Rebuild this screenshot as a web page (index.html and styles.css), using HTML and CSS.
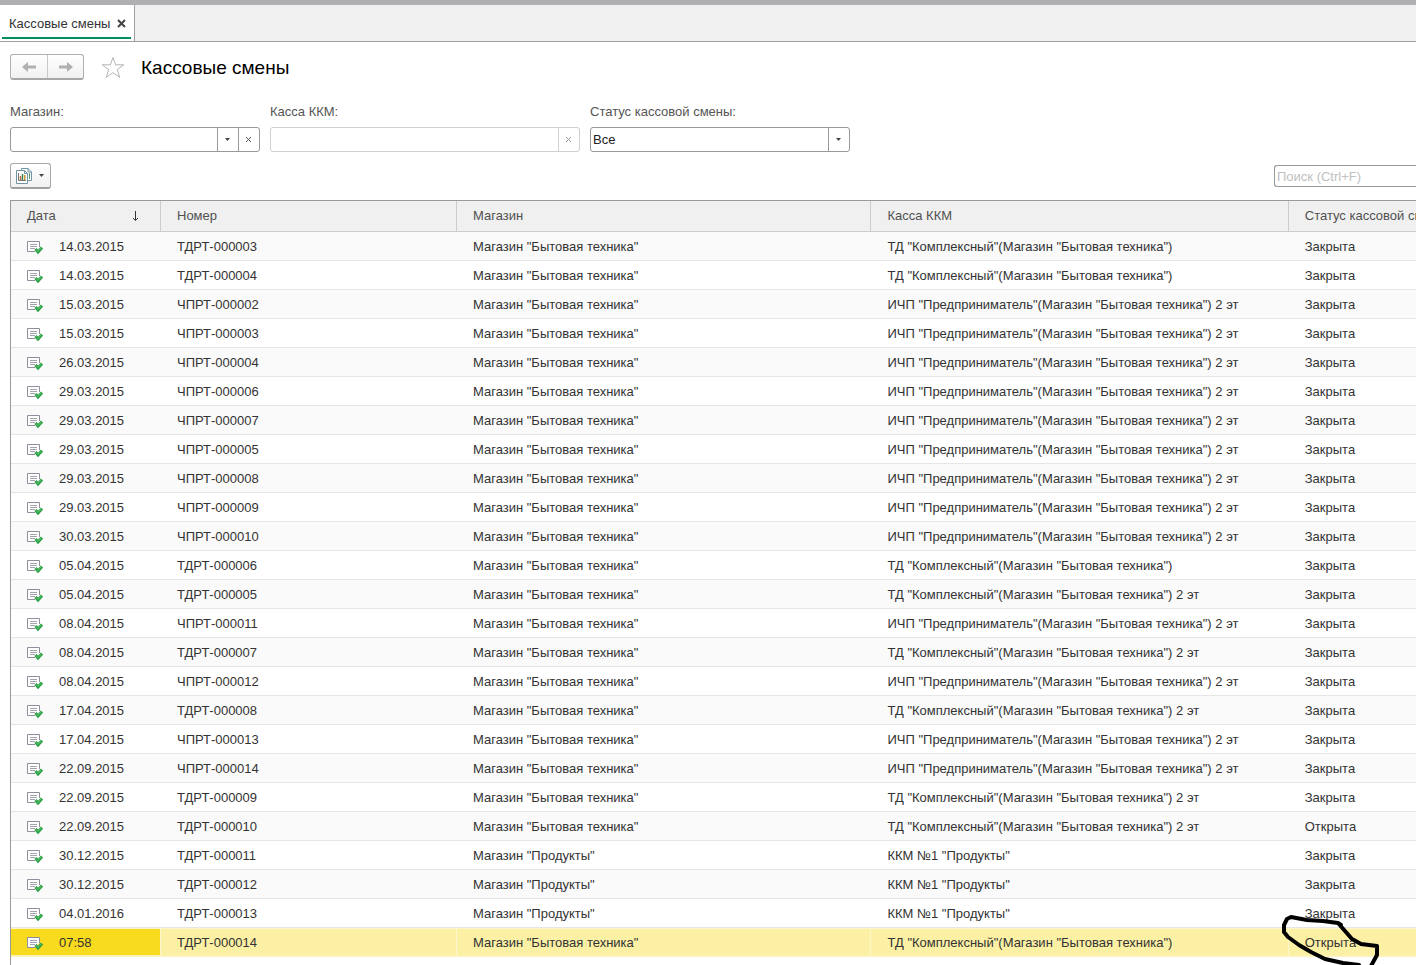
FILE: index.html
```html
<!DOCTYPE html>
<html lang="ru">
<head>
    <meta charset="UTF-8">
    <meta name="viewport" content="width=device-width, initial-scale=1.0">
    <title>Кассовые смены</title>
    <link rel="stylesheet" href="styles.css">
</head>
<body>
    <svg class="sprite" aria-hidden="true">
        <symbol id="icon-doc" viewBox="0 0 16 14">
            <path d="M12.500 7V1.500H0.500V11.500H8" fill="#fff" stroke="#8f8f9c"/>
            <path d="M3 4.500H10M3 6.500H10M3 8.500H8" stroke="#a3a3ad" fill="none"/>
            <path d="M8.500 9L11 12L15 7.500" stroke="#2f9e48" stroke-width="3" fill="none"/>
            <path d="M9 9.500L11 11.500L14.500 7.500" stroke="#58c86c" stroke-width="1" fill="none"/>
        </symbol>
        <symbol id="icon-caret" viewBox="0 0 5 3">
            <path d="M0 0H5L2.500 3Z" fill="#444"/>
        </symbol>
        <symbol id="icon-cross" viewBox="0 0 7 7">
            <path d="M1 1L6 6M6 1L1 6" stroke="currentColor" fill="none"/>
        </symbol>
    </svg>

    <div class="tabs">
        <div class="tab">
            <a href="#" class="tab-title">Кассовые смены</a>
            <button class="tab-close" aria-label="Закрыть">
                <svg width="9" height="9" viewBox="0 0 9 9"><path d="M1 1L8 8M8 1L1 8" stroke="#444" stroke-width="2" fill="none"/></svg>
            </button>
        </div>
    </div>

    <div class="title-bar">
        <div class="nav-buttons">
            <button aria-label="Назад">
                <svg width="14" height="12" viewBox="0 0 14 12"><path d="M0 6L6 1V4.500H14V7.500H6V11Z" fill="#b0b0b0"/></svg>
            </button>
            <button aria-label="Вперед">
                <svg width="14" height="12" viewBox="0 0 14 12"><path d="M14 6L8 1V4.500H0V7.500H8V11Z" fill="#b0b0b0"/></svg>
            </button>
        </div>
        <button class="star" aria-label="В избранное">
            <svg width="24" height="23" viewBox="0 0 24 23"><path d="M12 1.500L14.600 8.800H22.800L16.300 13.500L18.700 21.300L12 16.700L5.300 21.300L7.700 13.500L1.200 8.800H9.400Z" fill="#fff" stroke="#b4b4b4"/></svg>
        </button>
        <h1>Кассовые смены</h1>
    </div>

    <div class="filters">
        <div class="field field-shop">
            <label for="shop">Магазин:</label>
            <div class="box">
                <input type="text" id="shop">
                <button aria-label="Выбрать"><svg width="5" height="3"><use href="#icon-caret"/></svg></button>
                <button aria-label="Очистить"><svg width="7" height="7"><use href="#icon-cross"/></svg></button>
            </div>
        </div>
        <div class="field field-kkm">
            <label for="kkm">Касса ККМ:</label>
            <div class="box disabled">
                <input type="text" id="kkm" disabled>
                <button aria-label="Очистить" disabled><svg width="7" height="7"><use href="#icon-cross"/></svg></button>
            </div>
        </div>
        <div class="field field-status">
            <label for="status">Статус кассовой смены:</label>
            <div class="box">
                <select id="status">
                    <option>Все</option>
                    <option>Открыта</option>
                    <option>Закрыта</option>
                </select>
                <span class="select-arrow"><svg width="5" height="3"><use href="#icon-caret"/></svg></span>
            </div>
        </div>
    </div>

    <div class="toolbar">
        <button class="report-button" aria-label="Отчеты">
            <svg width="16" height="16" viewBox="0 0 16 16">
                <path d="M5.500 3V.5H12L15.500 4V12.500H12" fill="#fff" stroke="#7295a6"/>
                <path d="M12 .5V4H15.500" fill="none" stroke="#7295a6"/>
                <path d="M13.500 5V11" stroke="#4c9a68" fill="none"/>
                <path d="M.5 2.500H8.500L11.500 5.500V15.500H.5Z" fill="#fff" stroke="#7295a6"/>
                <path d="M8.500 2.500V5.500H11.500" fill="none" stroke="#7295a6"/>
                <path d="M2.500 5V12.500H10" fill="none" stroke="#777"/>
                <path d="M4.500 8V12" stroke="#c06a3a" stroke-width="1.500"/>
                <path d="M6.500 6V12" stroke="#3d8452" stroke-width="1.500"/>
                <path d="M8.800 7V12" stroke="#c9962f" stroke-width="1.500"/>
            </svg>
            <svg width="5" height="3"><use href="#icon-caret"/></svg>
        </button>
        <input type="search" class="search" placeholder="Поиск (Ctrl+F)" aria-label="Поиск">
    </div>

    <div class="list">
        <table>
            <colgroup>
                <col class="col-date">
                <col class="col-number">
                <col class="col-shop">
                <col class="col-kkm">
                <col>
            </colgroup>
            <thead>
                <tr>
                    <th>
                        <div class="sorted">Дата
                            <svg width="7" height="11" viewBox="0 0 7 11"><path d="M3.500 0V9M1 7L3.500 9.500L6 7" stroke="#333" fill="none"/></svg>
                        </div>
                    </th>
                    <th>Номер</th>
                    <th>Магазин</th>
                    <th>Касса ККМ</th>
                    <th>Статус кассовой смены</th>
                </tr>
            </thead>
            <tbody id="rows"></tbody>
        </table>
    </div>

    <script src="script.js"></script>
</body>
</html>
```

FILE: styles.css
```css
* {
    box-sizing: border-box;
}
body {
    margin: 0;
    height: 100vh;
    display: flex;
    flex-direction: column;
    overflow: hidden;
    background: #fff;
    color: #333;
    font-family: "Liberation Sans", Arial, sans-serif;
    font-size: 13px;
    line-height: 16px;
}
button, input, select {
    font: inherit;
    color: inherit;
    margin: 0;
    padding: 0;
    border: none;
    background: none;
}
button {
    display: flex;
    align-items: center;
    justify-content: center;
}
.sprite {
    display: none;
}

/* Tabs */
.tabs {
    display: flex;
    flex: none;
    height: 42px;
    background: #f0f0f0;
    border-top: 5px solid #b0b0b3;
    border-bottom: 1px solid #a0a0a0;
}
.tab {
    display: flex;
    align-items: center;
    gap: 7px;
    padding: 1px 8px 0 9px;
    background: linear-gradient(#00905e, #00905e) 2px 32px / calc(100% - 5px) 2px no-repeat #fff;
    border-right: 1px solid #a0a0a0;
}
.tab-title {
    color: #333;
    text-decoration: none;
}

/* Title */
.title-bar {
    display: flex;
    flex: none;
    align-items: center;
    height: 50px;
    padding: 0 10px;
}
.nav-buttons {
    display: flex;
    height: 26px;
    border: 1px solid #b0b0b0;
    border-bottom: 2px solid #a8a8a8;
    border-radius: 3px;
    background: linear-gradient(#fff, #f1f1f1);
}
.nav-buttons button {
    width: 36px;
}
.nav-buttons button + button {
    border-left: 1px solid #c8c8c8;
}
.star {
    margin: 0 16px 0 17px;
}
h1 {
    margin: 0;
    padding-top: 2px;
    font-size: 19px;
    line-height: 24px;
    font-weight: normal;
    color: #000;
}

/* Filters */
.filters {
    display: flex;
    flex: none;
    gap: 10px;
    padding: 12px 10px 0;
}
.field {
    display: flex;
    flex-direction: column;
    gap: 7px;
    color: #555;
}
.field-shop {
    width: 250px;
}
.field-kkm {
    width: 310px;
}
.field-status {
    width: 260px;
}
.box {
    position: relative;
    display: flex;
    height: 25px;
    border: 1px solid #999;
    border-radius: 3px;
    color: #222;
}
.box input, .box select {
    flex: 1;
    min-width: 0;
    padding: 0 2px;
    appearance: none;
    outline: none;
}
.box button {
    width: 21px;
    padding-right: 2px;
    border-left: 1px solid #999;
    color: #555;
}
.box.disabled, .box.disabled button {
    border-color: #d0d0d0;
    color: #999;
}
.select-arrow {
    position: absolute;
    top: 0;
    right: 0;
    bottom: 0;
    width: 21px;
    padding-right: 2px;
    display: flex;
    align-items: center;
    justify-content: center;
    border-left: 1px solid #999;
    pointer-events: none;
}

/* Toolbar */
.toolbar {
    display: flex;
    flex: none;
    align-items: center;
    justify-content: space-between;
    height: 48px;
    padding-left: 10px;
}
.report-button {
    gap: 7px;
    width: 41px;
    height: 26px;
    padding-right: 2px;
    border: 1px solid #a8a8a8;
    border-bottom: 2px solid #a0a0a0;
    border-radius: 3px;
    background: linear-gradient(#fff, #f1f1f1);
}
.search {
    width: 142px;
    height: 22px;
    padding: 0 2px;
    border: 1px solid #999;
    border-right: none;
    border-radius: 3px 0 0 3px;
    appearance: none;
}
.search::placeholder {
    color: #c0c0c0;
}

/* List */
.list {
    flex: 1;
    margin-left: 10px;
    border-top: 1px solid #999;
    border-left: 1px solid #999;
}
table {
    width: 100%;
    table-layout: fixed;
    border-collapse: separate;
    border-spacing: 0;
}
.col-date {
    width: 150px;
}
.col-number {
    width: 296px;
}
.col-shop {
    width: 29.5%;
}
.col-kkm {
    width: 29.7%;
}
th, td {
    height: 29px;
    padding: 2px 0 0 16px;
    text-align: left;
    font-weight: normal;
    white-space: nowrap;
    overflow: hidden;
    border-bottom: 1px solid #e6e6e6;
}
th {
    height: 31px;
    padding-top: 0;
    color: #505050;
    background: #f0f0f0;
    border-right: 1px solid #ccc;
    border-bottom: 1px solid #ccc;
}
th:last-child {
    border-right: none;
}
.sorted {
    display: flex;
    align-items: center;
    justify-content: space-between;
    padding-right: 21px;
}
tbody tr:nth-child(odd) {
    background: #fafafa;
}
.date {
    display: flex;
    align-items: center;
    gap: 16px;
}
tbody tr.selected {
    background: #fcf0a4;
}
.selected td {
    border-right: 1px solid #fdf6cc;
    border-top: 1px solid #fdf6cc;
    border-bottom: 2px solid #fdf3b8;
}
.selected td:first-child {
    background: #f8da1e;
}
.selected td:last-child {
    position: relative;
    overflow: visible;
    border-right: none;
}
.marker {
    position: absolute;
    top: -15px;
    left: -8px;
}
```

FILE: script.js
```js
const BT = 'Магазин "Бытовая техника"';
const PR = 'Магазин "Продукты"';
const TD = 'ТД "Комплексный"(Магазин "Бытовая техника")';
const ICHP = 'ИЧП "Предприниматель"(Магазин "Бытовая техника") 2 эт';
const KKM = 'ККМ №1 "Продукты"';

const shifts = [
    ['14.03.2015', 'ТДРТ-000003', BT, TD, 'Закрыта'],
    ['14.03.2015', 'ТДРТ-000004', BT, TD, 'Закрыта'],
    ['15.03.2015', 'ЧПРТ-000002', BT, ICHP, 'Закрыта'],
    ['15.03.2015', 'ЧПРТ-000003', BT, ICHP, 'Закрыта'],
    ['26.03.2015', 'ЧПРТ-000004', BT, ICHP, 'Закрыта'],
    ['29.03.2015', 'ЧПРТ-000006', BT, ICHP, 'Закрыта'],
    ['29.03.2015', 'ЧПРТ-000007', BT, ICHP, 'Закрыта'],
    ['29.03.2015', 'ЧПРТ-000005', BT, ICHP, 'Закрыта'],
    ['29.03.2015', 'ЧПРТ-000008', BT, ICHP, 'Закрыта'],
    ['29.03.2015', 'ЧПРТ-000009', BT, ICHP, 'Закрыта'],
    ['30.03.2015', 'ЧПРТ-000010', BT, ICHP, 'Закрыта'],
    ['05.04.2015', 'ТДРТ-000006', BT, TD, 'Закрыта'],
    ['05.04.2015', 'ТДРТ-000005', BT, TD + ' 2 эт', 'Закрыта'],
    ['08.04.2015', 'ЧПРТ-000011', BT, ICHP, 'Закрыта'],
    ['08.04.2015', 'ТДРТ-000007', BT, TD + ' 2 эт', 'Закрыта'],
    ['08.04.2015', 'ЧПРТ-000012', BT, ICHP, 'Закрыта'],
    ['17.04.2015', 'ТДРТ-000008', BT, TD + ' 2 эт', 'Закрыта'],
    ['17.04.2015', 'ЧПРТ-000013', BT, ICHP, 'Закрыта'],
    ['22.09.2015', 'ЧПРТ-000014', BT, ICHP, 'Закрыта'],
    ['22.09.2015', 'ТДРТ-000009', BT, TD + ' 2 эт', 'Закрыта'],
    ['22.09.2015', 'ТДРТ-000010', BT, TD + ' 2 эт', 'Открыта'],
    ['30.12.2015', 'ТДРТ-000011', PR, KKM, 'Закрыта'],
    ['30.12.2015', 'ТДРТ-000012', PR, KKM, 'Закрыта'],
    ['04.01.2016', 'ТДРТ-000013', PR, KKM, 'Закрыта'],
    ['07:58', 'ТДРТ-000014', BT, TD, 'Открыта']
];

const rows = document.getElementById('rows');

shifts.forEach((shift, index) => {
    const tr = document.createElement('tr');
    shift.forEach((text, i) => {
        const td = document.createElement('td');
        if (i === 0) {
            td.innerHTML = '<div class="date"><svg width="16" height="14"><use href="#icon-doc"/></svg><span>' + text + '</span></div>';
        } else {
            td.textContent = text;
        }
        tr.appendChild(td);
    });
    // Last shift is the current one
    if (index === shifts.length - 1) {
        tr.className = 'selected';
        tr.lastChild.insertAdjacentHTML('beforeend',
            '<svg class="marker" width="104" height="56" viewBox="0 0 104 56">' +
            '<path d="M60 11L57 9L42 7L26 6L10 3L6 5L3 11L3 18L7 23L18 31L30 38L44 45L62 49L78 51M57 9L64 17L71 25L80 30L96 32L96 41L90 52" ' +
            'fill="none" stroke="#000" stroke-width="4" stroke-linejoin="round" stroke-linecap="round"/></svg>');
    }
    rows.appendChild(tr);
});
```
